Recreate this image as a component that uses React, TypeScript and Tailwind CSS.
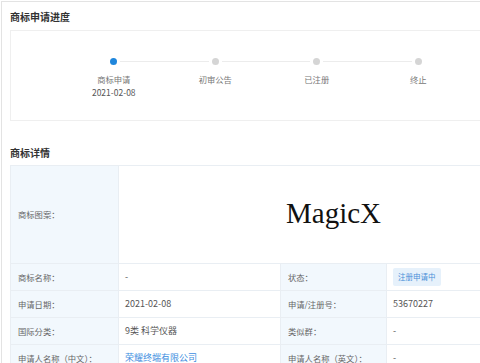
import React from 'react';

const steps = [
  { label: '商标申请', date: '2021-02-08', active: true },
  { label: '初审公告', date: '', active: false },
  { label: '已注册', date: '', active: false },
  { label: '终止', date: '', active: false },
];

const rows: { l1: string; v1: React.ReactNode; l2: string; v2: React.ReactNode }[] = [
  {
    l1: '商标名称：',
    v1: '-',
    l2: '状态：',
    v2: (
      <span className="inline-flex h-[18px] items-center rounded-[2px] bg-[#e6f1fb] px-[5px] text-[7.5px] text-[#4a8fd8]">
        注册申请中
      </span>
    ),
  },
  { l1: '申请日期：', v1: '2021-02-08', l2: '申请/注册号：', v2: '53670227' },
  { l1: '国际分类：', v1: '9类 科学仪器', l2: '类似群：', v2: '-' },
  {
    l1: '申请人名称（中文）：',
    v1: <span className="text-[#3d8ee0]">荣耀终端有限公司</span>,
    l2: '申请人名称（英文）：',
    v2: '-',
  },
];

const labelCell = 'flex items-center border-b border-r border-[#e9eef3] bg-[#f2f8fd] pl-[7px] text-[8.3px] text-[#666]';
const valueCell = 'flex items-center border-b border-r border-[#e9eef3] bg-white pl-[6px] text-[9px] text-[#555]';

const App: React.FC = () => {
  return (
    <div
      className="h-[363px] w-[480px] overflow-hidden bg-white"
      style={{ fontFamily: '"Noto Sans CJK SC", "Noto Sans", sans-serif' }}
    >
      <div className="ml-px mt-px h-full border-l border-t border-[#e3e3e3] pl-[8px]">
        {/* 进度 */}
        <div className="flex h-[28px] items-center text-[10px] font-bold text-[#333]">商标申请进度</div>
        <div className="h-[91px] w-[530px] border border-[#efefef]">
          <div className="ml-[99px] mt-[27px] flex w-[312px] items-center">
            {steps.map((s, i) => (
              <React.Fragment key={s.label}>
                <span
                  className={`h-[7px] w-[7px] shrink-0 rounded-full ${
                    s.active ? 'bg-[#1f86dc]' : 'bg-[#d5d5d5]'
                  }`}
                />
                {i < steps.length - 1 && <span className="mx-[3px] h-px flex-1 bg-[#ececec]" />}
              </React.Fragment>
            ))}
          </div>
          <div className="ml-[52px] mt-[8px] flex">
            {steps.map((s) => (
              <div key={s.label} className="flex w-[101.5px] flex-col items-center text-[8.3px] leading-[13px] text-[#777]">
                <span>{s.label}</span>
                {s.date && <span className="text-[8.5px] text-[#555]">{s.date}</span>}
              </div>
            ))}
          </div>
        </div>

        {/* 详情 */}
        <div className="mt-[18px] flex h-[26px] items-center text-[10px] font-bold text-[#333]">商标详情</div>
        <div className="grid w-[530px] grid-cols-[108px_162px_106px_154px] border-l border-t border-[#e9eef3]">
          <div className={`${labelCell} h-[98px]`}>商标图案：</div>
          <div className="col-span-3 flex h-[98px] items-center justify-center border-b border-r border-[#e9eef3] pb-[3px] pl-[8px]">
            <span
              className="text-[29px] leading-none text-[#111]"
              style={{ fontFamily: '"Liberation Serif", serif' }}
            >
              MagicX
            </span>
          </div>
          {rows.map((r) => (
            <React.Fragment key={r.l1}>
              <div className={`${labelCell} h-[27px]`}>{r.l1}</div>
              <div className={`${valueCell} h-[27px]`}>{r.v1}</div>
              <div className={`${labelCell} h-[27px]`}>{r.l2}</div>
              <div className={`${valueCell} h-[27px]`}>{r.v2}</div>
            </React.Fragment>
          ))}
        </div>
      </div>
    </div>
  );
};

export default App;
